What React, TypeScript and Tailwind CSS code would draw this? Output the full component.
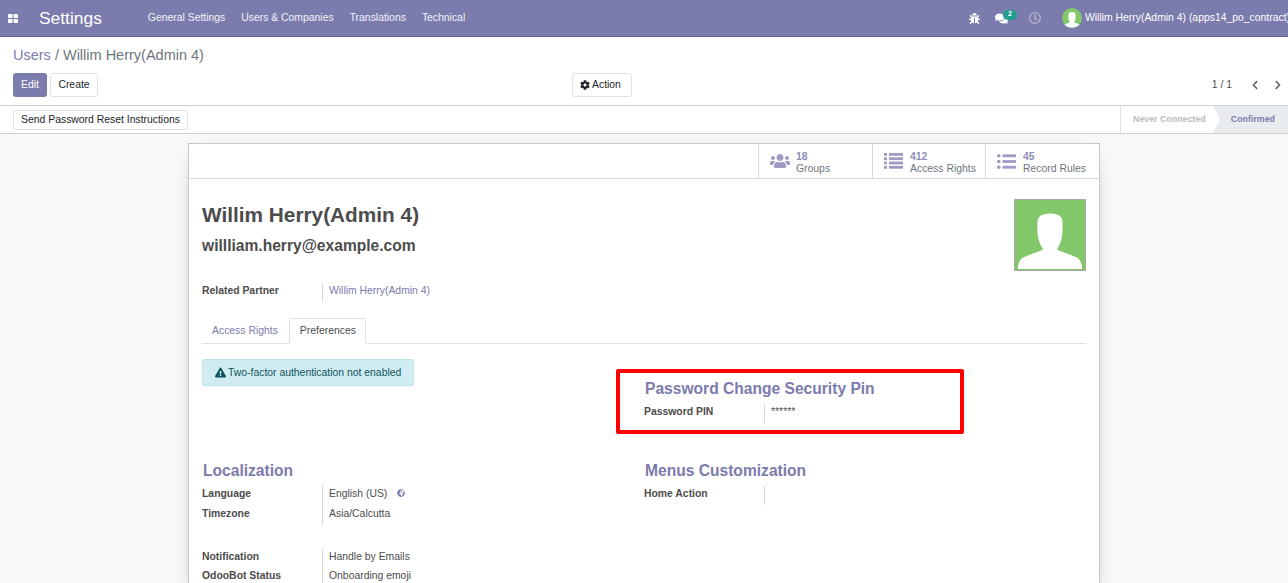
import { FaBug, FaCog, FaComments, FaChevronLeft, FaChevronRight, FaExclamationTriangle, FaGlobeAfrica, FaRegClock, FaUsers } from "react-icons/fa";

const menus = ["General Settings", "Users & Companies", "Translations", "Technical"];

const Avatar = ({ className }: { className: string }) => (
  <svg viewBox="0 0 72 72" className={className}>
    <rect width="72" height="72" fill="#82c86a" />
    <path d="M36 14c-10 0-13 4-13 10 0 7 0 14 2 19 1 3 3 6 4 8-6 3-14 5-20 8-4 2-6 6-6 12h66c0-6-2-10-6-12-6-3-14-5-20-8 1-2 3-5 4-8 2-5 2-12 2-19 0-6-3-10-13-10z" fill="#fff" />
  </svg>
);

const ListIcon = () => (
  <svg viewBox="0 0 19 16" className="h-[16px] w-[19px] fill-[#9d9bc4]">
    {[0, 4.3, 8.6, 12.9].map((y) => (
      <g key={y}>
        <rect y={y} width="3" height="2.8" />
        <rect x="5" y={y} width="14" height="2.8" />
      </g>
    ))}
  </svg>
);

const BulletIcon = () => (
  <svg viewBox="0 0 19 15" className="h-[15px] w-[19px] fill-[#9d9bc4]">
    {[1.8, 7.5, 13.2].map((y) => (
      <g key={y}>
        <circle cx="1.8" cy={y} r="1.8" />
        <rect x="5.5" y={y - 1.4} width="13.5" height="2.8" />
      </g>
    ))}
  </svg>
);

const Field = ({ label, children }: { label: string; children?: React.ReactNode }) => (
  <div className="flex leading-[15px]">
    <div className="w-[120px] shrink-0 font-bold text-[#4c4c4c]">{label}</div>
    <div className="h-full min-h-[19px] border-l border-[#d9d9d9] pl-[6px] text-[#4c4c4c]">{children}</div>
  </div>
);

const StatButton = ({ icon, count, label, width }: { icon: React.ReactNode; count: string; label: string; width: string }) => (
  <div className={`flex h-full items-center gap-[6px] border-l border-[#d5d8dd] pl-[11px] ${width}`}>
    <span className="flex w-[20px] text-[20px] text-[#9d9bc4]">{icon}</span>
    <div className="whitespace-nowrap pt-[4px] leading-[12px]">
      <div className="font-bold text-[#8f8dbb]">{count}</div>
      <div className="text-[#6c757d]">{label}</div>
    </div>
  </div>
);

export default function App() {
  return (
    <div className="flex h-[583px] flex-col overflow-hidden bg-white font-['Liberation_Sans',Arial,sans-serif] text-[10.4px] text-[#4c4c4c]">
      <header className="flex h-[37px] shrink-0 items-center overflow-hidden border-b border-[#5f5e97] bg-[#7c7bad] text-white">
        <svg viewBox="0 0 10 9" className="ml-[8px] h-[9px] w-[10px] fill-white">
          <rect width="4.5" height="4" rx="0.7" />
          <rect x="5.5" width="4.5" height="4" rx="0.7" />
          <rect y="5" width="4.5" height="4" rx="0.7" />
          <rect x="5.5" y="5" width="4.5" height="4" rx="0.7" />
        </svg>
        <div className="ml-[21px] text-[17.4px]">Settings</div>
        <nav className="ml-[46px] flex gap-4 text-white/90">
          {menus.map((m) => (
            <span key={m}>{m}</span>
          ))}
        </nav>
        <div className="ml-auto flex items-center whitespace-nowrap">
          <FaBug className="mr-[15px] text-[11px]" />
          <div className="relative mr-[21px]">
            <FaComments className="text-[13px]" />
            <span className="absolute -top-[2px] left-[8px] flex h-[10px] w-[14px] items-center justify-center rounded-full bg-[#1f9d8f] text-[7px] font-bold">2</span>
          </div>
          <FaRegClock className="mr-[21px] text-[12px] text-white/50" />
          <span className="mr-[3px] flex h-[20px] w-[20px] overflow-hidden rounded-full">
            <Avatar className="h-full w-full" />
          </span>
          <span className="w-[203px]">Willim Herry(Admin 4) (apps14_po_contract)</span>
        </div>
      </header>

      <div className="h-[69px] shrink-0 border-b border-[#cfcfcf] px-[13px] pt-[9px]">
        <div className="text-[14.5px] leading-[18px] text-[#6c757d]">
          <span className="text-[#7c7bad]">Users</span> / Willim Herry(Admin 4)
        </div>
        <div className="mt-[9px] flex items-center">
          <button className="h-[24px] w-[34px] rounded-[3px] bg-[#7c7bad] text-white">Edit</button>
          <button className="ml-[3px] h-[24px] w-[48px] rounded-[3px] border border-[#dee2e6] text-[#212529]">Create</button>
          <button className="ml-[474px] flex h-[24px] w-[60px] items-center gap-[2px] rounded-[3px] border border-[#dee2e6] pl-[7px] text-[#212529]">
            <FaCog className="text-[10px]" />
            Action
          </button>
          <span className="ml-auto text-[#4c4c4c]">1 / 1</span>
          <FaChevronLeft className="ml-[18px] text-[10px] text-[#666]" />
          <FaChevronRight className="ml-[13px] mr-[-8px] text-[10px] text-[#666]" />
        </div>
      </div>

      <div className="flex h-[28px] shrink-0 items-center justify-between border-b border-[#cfcfcf] pl-[13px]">
        <button className="h-[20px] w-[175px] whitespace-nowrap rounded-[3px] border border-[#dee2e6] text-[#212529]">Send Password Reset Instructions</button>
        <div className="flex h-full items-center text-[8.84px] font-bold">
          <div className="relative flex h-full w-[93px] items-center border-l border-[#dee2e6] pl-[12px] text-[#b6bcc2]">Never Connected</div>
          <div className="relative flex h-full w-[75px] items-center justify-end bg-[#e9ecef] pr-[13px] text-[#7c7bad]">
            <span className="absolute left-0 top-0 h-0 w-0 border-y-[13.5px] border-l-[7px] border-y-transparent border-l-white" />
            Confirmed
          </div>
        </div>
      </div>

      <main className="flex-1 bg-[repeating-conic-gradient(#f5f5f5_0_25%,#fbfbfb_0_50%)] bg-[length:4px_4px] pt-[9px]">
        <div className="relative ml-[188px] h-[460px] w-[912px] border border-[#c8c8d0] bg-white shadow-[0_5px_20px_-15px_#000]">
          <div className="flex h-[35px] justify-end border-b border-[#d5d8dd]">
            <StatButton icon={<FaUsers />} count="18" label="Groups" width="w-[114px]" />
            <StatButton icon={<ListIcon />} count="412" label="Access Rights" width="w-[113px]" />
            <StatButton icon={<BulletIcon />} count="45" label="Record Rules" width="w-[114px]" />
          </div>

          <div className="pl-[13px] pr-[13px] pt-[20px]">
            <div className="flex justify-between">
              <div>
                <h1 className="text-[20.8px] font-bold leading-[32px]">Willim Herry(Admin 4)</h1>
                <h2 className="text-[15.6px] font-bold leading-[29px]">willliam.herry@example.com</h2>
              </div>
              <div className="border border-[#a8a8a8]">
                <Avatar className="block h-[70px] w-[70px]" />
              </div>
            </div>

            <div className="mt-[12px]">
              <Field label="Related Partner"><span className="text-[#7c7bad]">Willim Herry(Admin 4)</span></Field>
            </div>

            <div className="mt-[16px] flex h-[26px] border-b border-[#dee2e6]">
              <div className="pl-[10px] pr-[11px] pt-[5px] text-[#7c7bad]">Access Rights</div>
              <div className="-mb-px h-[26px] rounded-t-[2px] border border-[#dee2e6] border-b-white bg-white pl-[10px] pr-[9px] pt-[4px]">Preferences</div>
            </div>

            <div className="mt-[15px] grid grid-cols-[442px_1fr]">
              <div>
                <div className="flex h-[27px] w-[212px] items-center gap-[2px] whitespace-nowrap rounded-[2px] border border-[#bee5eb] bg-[#d1ecf1] pl-[12px] text-[#0c5460]">
                  <FaExclamationTriangle className="text-[11px]" />
                  Two-factor authentication not enabled
                </div>
              </div>
              <div className="pt-[19px]">
                <h3 className="ml-px text-[15.6px] font-bold leading-[22px] text-[#7c7bad]">Password Change Security Pin</h3>
                <div className="mt-[4px]">
                  <Field label="Password PIN">******</Field>
                </div>
              </div>
            </div>

            <div className="mt-[37px] grid grid-cols-[442px_1fr]">
              <div>
                <h3 className="ml-px text-[15.6px] font-bold leading-[22px] text-[#7c7bad]">Localization</h3>
                <div className="mt-[4px] flex flex-col">
                  <div className="h-[20px]">
                    <Field label="Language">
                      <span className="flex h-[20px] items-start gap-[10px]">English (US) <FaGlobeAfrica className="mt-[3px] text-[8px] text-[#7c7bad]" /></span>
                    </Field>
                  </div>
                  <Field label="Timezone">Asia/Calcutta</Field>
                </div>
                <div className="mt-[24px] flex flex-col">
                  <Field label="Notification">Handle by Emails</Field>
                  <Field label="OdooBot Status">Onboarding emoji</Field>
                </div>
              </div>
              <div>
                <h3 className="ml-px text-[15.6px] font-bold leading-[22px] text-[#7c7bad]">Menus Customization</h3>
                <div className="mt-[4px]"><Field label="Home Action" /></div>
              </div>
            </div>
          </div>

          <div className="absolute left-[427px] top-[225px] h-[65px] w-[348px] rounded-[2px] border-4 border-[#ff0000]" />
        </div>
      </main>
    </div>
  );
}
